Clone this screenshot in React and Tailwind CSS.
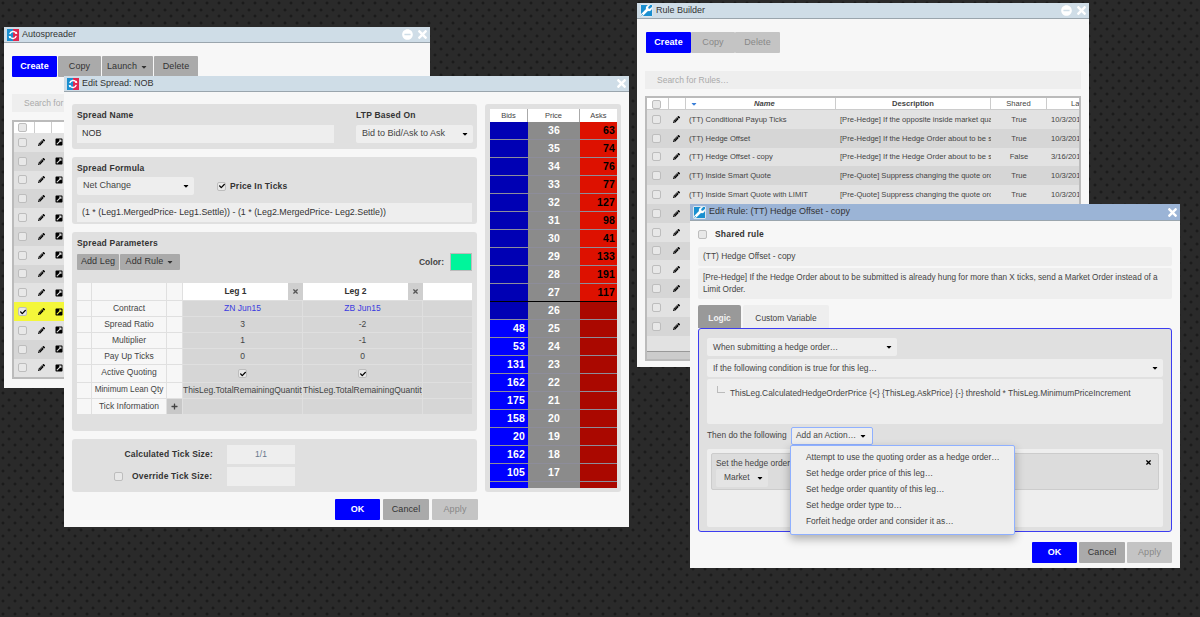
import { FaPencilAlt, FaExternalLinkSquareAlt, FaTimes, FaMinusCircle, FaCheck, FaPlus, FaWrench, FaCaretDown } from 'react-icons/fa'

const LADDER = [
  [36, '', 63], [35, '', 74], [34, '', 76], [33, '', 77], [32, '', 127],
  [31, '', 98], [30, '', 41], [29, '', 133], [28, '', 191], [27, '', 117],
  [26, '', ''], [25, 48, ''], [24, 53, ''], [23, 131, ''], [22, 162, ''],
  [21, 175, ''], [20, 158, ''], [19, 20, ''], [18, 162, ''], [17, 105, ''], ['', '', ''],
]

const RULES = [
  ['(TT) Conditional Payup Ticks', '[Pre-Hedge] If the opposite inside market quantity is', 'True', '10/3/2014'],
  ['(TT) Hedge Offset', '[Pre-Hedge] If the Hedge Order about to be submitted', 'True', '10/3/2014'],
  ['(TT) Hedge Offset - copy', '[Pre-Hedge] If the Hedge Order about to be submitted', 'False', '3/16/2015'],
  ['(TT) Inside Smart Quote', '[Pre-Quote] Suppress changing the quote order', 'True', '10/3/2014'],
  ['(TT) Inside Smart Quote with LIMIT', '[Pre-Quote] Suppress changing the quote order', 'True', '10/3/2014'],
  ['', '', '', ''], ['', '', '', ''], ['', '', '', ''], ['', '', '', ''], ['', '', '', ''], ['', '', '', ''], ['', '', '', ''],
]

const PARAMS = [
  ['Contract', 'ZN Jun15', 'ZB Jun15'],
  ['Spread Ratio', '3', '-2'],
  ['Multiplier', '1', '-1'],
  ['Pay Up Ticks', '0', '0'],
  ['Active Quoting', 'check', 'check'],
  ['Minimum Lean Qty', 'ThisLeg.TotalRemainingQuantity', 'ThisLeg.TotalRemainingQuantity'],
  ['Tick Information', '', ''],
]

const ACTIONS = [
  'Attempt to use the quoting order as a hedge order…',
  'Set hedge order price of this leg…',
  'Set hedge order quantity of this leg…',
  'Set hedge order type to…',
  'Forfeit hedge order and consider it as…',
]

function SpreadLogo() {
  return (
    <svg viewBox="0 0 14 14" className="w-[12px] h-[12px] shrink-0">
      <rect x="0" y="0" width="7" height="14" fill="#1a8fd0" />
      <rect x="7" y="0" width="7" height="14" fill="#e0284f" />
      <path d="M3.2 6 A4 4 0 0 1 10.6 5" fill="none" stroke="#fff" strokeWidth="1.6" />
      <path d="M10.8 8 A4 4 0 0 1 3.4 9" fill="none" stroke="#fff" strokeWidth="1.6" />
      <path d="M9 5.6 L12 5.8 L11.4 2.8 Z" fill="#fff" />
      <path d="M5 8.4 L2 8.2 L2.6 11.2 Z" fill="#fff" />
    </svg>
  )
}

function RuleLogo() {
  return (
    <span className="w-[13px] h-[13px] shrink-0 bg-[#1a8fd0] rounded-[1px] flex items-center justify-center border border-[#dbe6ee]">
      <FaWrench className="text-white text-[11px]" />
    </span>
  )
}

function Win({ pos, logo, title, bar = 'bg-[#cfdde7]', barH = 'h-[16px]', minimize, children }) {
  return (
    <div className={`absolute bg-[#f7f7f7] flex flex-col overflow-hidden ${pos}`}>
      <div className={`shrink-0 flex items-center pl-[3px] pr-[1px] gap-[3px] border-b border-[#9aa5ad] ${barH} ${bar}`}>
        {logo}
        <span className="text-[9px] text-[#333]">{title}</span>
        <span className="ml-auto flex items-center gap-[3px] text-white">
          {minimize && <FaMinusCircle className="text-[11px]" />}
          <FaTimes className="text-[13px]" />
        </span>
      </div>
      {children}
    </div>
  )
}

function Check({ on, className = '' }) {
  return (
    <span className={`inline-flex items-center justify-center w-[9px] h-[9px] shrink-0 rounded-[2px] border border-[#bdbdbd] bg-[#e8e8e8] ${className}`}>
      {on && <FaCheck className="text-[6px] text-black" />}
    </span>
  )
}

function Btn({ kind, w, h = 'h-[21px]', children }) {
  const look = kind === 'blue' ? 'bg-[#0000ff] text-white font-bold'
    : kind === 'dark' ? 'bg-[#aaaaaa] text-[#333]'
    : 'bg-[#c4c4c4] text-[#888]'
  return (
    <span className={`flex items-center justify-center gap-[3px] text-[9px] tracking-[0.1px] rounded-[1px] ${look} ${w} ${h}`}>
      {children}
    </span>
  )
}

function Select({ w, text, className = '', bg = 'bg-[#eeeeee]', pad = 'pl-[6px]', size = 'text-[9px]' }) {
  return (
    <div className={`flex items-center justify-between h-[18px] rounded-[2px] text-[#444] pr-[4px] ${size} ${bg} ${pad} ${w} ${className}`}>
      <span>{text}</span>
      <FaCaretDown className="text-[8px] text-black" />
    </div>
  )
}

function Panel({ className = '', children }) {
  return <div className={`bg-[#e0e0e0] rounded-[3px] ${className}`}>{children}</div>
}

function Label({ children }) {
  return <div className="text-[8.5px] font-bold leading-[12px] tracking-[0.2px]">{children}</div>
}

function AutospreaderRow({ i }) {
  const yellow = i === 9
  const bg = yellow ? 'bg-[#f4f73a]' : i % 2 ? 'bg-[#d6d6d6]' : 'bg-[#e2e2e2]'
  return (
    <div className={`h-[18.8px] flex items-center pl-[4px] ${bg}`}>
      <Check on={yellow} />
      <FaPencilAlt className="text-[7px] text-black ml-[11px]" />
      <FaExternalLinkSquareAlt className="text-[8px] text-black ml-[10px]" />
    </div>
  )
}

function Autospreader() {
  return (
    <Win pos="left-[4px] top-[27px] w-[426px] h-[361px]" logo={<SpreadLogo />} title="Autospreader" minimize>
      <div className="flex pl-[8px] pt-[13px] gap-[1px]">
        <Btn kind="blue" w="w-[45px]">Create</Btn>
        <Btn kind="dark" w="w-[43px]">Copy</Btn>
        <Btn kind="dark" w="w-[51px]">Launch <FaCaretDown className="text-[8px]" /></Btn>
        <Btn kind="dark" w="w-[44px]">Delete</Btn>
      </div>
      <div className="mx-[8px] mt-[17px] h-[18px] bg-[#eeeeee] text-[8.5px] text-[#aaa] pl-[12px] flex items-center">Search for Autospreader…</div>
      <div className="mx-[8px] mt-[8px] border-2 border-[#bbb]">
        <div className="h-[11px] bg-white flex items-center">
          <span className="w-[21px] h-full pl-[4px] flex items-center border-r border-[#ccc]"><Check /></span>
          <span className="w-[17px] h-full border-r border-[#ccc]" />
        </div>
        {Array.from({ length: 13 }, (_, i) => <AutospreaderRow key={i} i={i} />)}
      </div>
    </Win>
  )
}

function ParamCell({ value }) {
  if (value === 'check') return <Check on />
  if (value.endsWith('Jun15')) return <span className="text-[#3a3ae0]">{value}</span>
  return <span className="whitespace-nowrap">{value}</span>
}

function Ladder() {
  return (
    <Panel className="w-[136px] h-[388px] pt-[5px] pb-[4px] pl-[5px] pr-[4px] flex flex-col">
      <div className="grid grid-cols-[38px_52px_37px] h-[13px] bg-white text-[7.5px] text-[#444] text-center leading-[13px] shrink-0">
        <span className="border-r border-[#aaa]">Bids</span>
        <span className="border-r border-[#aaa]">Price</span>
        <span>Asks</span>
      </div>
      <div className="overflow-hidden flex-1 min-h-0">
        {LADDER.map(([price, bid, ask], i) => {
          const upper = i < 11
          return (
            <div key={i} className={`grid grid-cols-[38px_52px_37px] h-[18.03px] text-[10.5px] font-bold tracking-[0.2px] leading-[17px] ${i === 9 ? 'border-b-2 border-black' : 'border-b border-[#8d8d9a]'}`}>
              <span className={`text-white text-right pr-[3px] ${upper ? 'bg-[#0000b4]' : 'bg-[#0000ff]'}`}>{bid}</span>
              <span className="bg-[#8b8b8b] text-white text-center">{price}</span>
              <span className={`text-black text-right pr-[2px] ${i < 10 ? 'bg-[#dd1100]' : 'bg-[#aa0800]'}`}>{ask}</span>
            </div>
          )
        })}
      </div>
    </Panel>
  )
}

function EditSpread() {
  return (
    <Win pos="left-[64px] top-[76px] w-[565px] h-[451px]" logo={<SpreadLogo />} title="Edit Spread: NOB">
      <div className="flex gap-[8px] pl-[8px] pt-[12px] text-[#333]">
        <div className="w-[405px] flex flex-col gap-[8px]">
          <Panel className="h-[45px] px-[5px] pt-[5px] grid grid-cols-[279px_1fr]">
            <div>
              <Label>Spread Name</Label>
              <div className="w-[257px] h-[18px] mt-[4px] bg-[#eeeeee] text-[9px] pl-[5px] flex items-center">NOB</div>
            </div>
            <div>
              <Label>LTP Based On</Label>
              <Select w="w-[117px]" className="mt-[4px]" text="Bid to Bid/Ask to Ask" />
            </div>
          </Panel>
          <Panel className="h-[67px] px-[5px] pt-[5px]">
            <Label>Spread Formula</Label>
            <div className="flex items-center mt-[3px]">
              <Select w="w-[117px]" text="Net Change" />
              <Check on className="ml-[23px]" />
              <span className="text-[8.5px] font-bold ml-[4px] tracking-[0.2px]">Price In Ticks</span>
            </div>
            <div className="h-[19px] mt-[8px] bg-[#eeeeee] text-[8.9px] pl-[5px] flex items-center">
              (1 * (Leg1.MergedPrice- Leg1.Settle)) - (1 * (Leg2.MergedPrice- Leg2.Settle))
            </div>
          </Panel>
          <Panel className="h-[199px] px-[5px] pt-[5px]">
            <Label>Spread Parameters</Label>
            <div className="flex items-center gap-[1px] mt-[4px]">
              <Btn kind="dark" w="w-[42px]" h="h-[16px]">Add Leg</Btn>
              <Btn kind="dark" w="w-[60px]" h="h-[16px]">Add Rule <FaCaretDown className="text-[8px]" /></Btn>
              <span className="ml-auto text-[8.5px] font-bold text-[#444] mr-[5px]">Color:</span>
              <span className="w-[22px] h-[18px] bg-[#00f59b] border border-[#bbb]" />
            </div>
            <div className="mt-[12px] grid grid-cols-[15px_75px_16px_105px_15px_105px_15px_1fr] text-[8.5px] text-center text-[#444]">
              <span className="h-[17px] bg-[#f7f7f7] border-r border-[#e0e0e0]" />
              <span className="bg-[#f7f7f7] border-r border-[#e0e0e0]" />
              <span className="bg-[#f7f7f7] border-r border-[#e0e0e0]" />
              <span className="bg-white font-bold leading-[17px] text-[#333]">Leg 1</span>
              <span className="bg-[#cfcfcf] flex items-center justify-center"><FaTimes className="text-[7px] text-[#555]" /></span>
              <span className="bg-white font-bold leading-[17px] text-[#333]">Leg 2</span>
              <span className="bg-[#cfcfcf] flex items-center justify-center"><FaTimes className="text-[7px] text-[#555]" /></span>
              <span className="bg-white" />
              {PARAMS.map(([label, a, b], i) => (
                <div key={label} className="contents">
                  <span className={`bg-[#f7f7f7] border-t border-r border-[#e0e0e0] ${i === 4 ? 'h-[18px]' : 'h-[16px]'}`} />
                  <span className={`bg-[#f7f7f7] border-t border-r border-[#e0e0e0] whitespace-nowrap flex justify-center ${i === 4 ? 'pt-[1px]' : 'items-center'} ${i === 5 ? 'text-[8.2px]' : ''}`}>{label}</span>
                  <span className="bg-[#f7f7f7] border-t border-r border-[#e0e0e0] flex items-center justify-center">
                    {i === 6 && <span className="w-full h-full bg-[#c8c8c8] flex items-center justify-center"><FaPlus className="text-[7px] text-[#444]" /></span>}
                  </span>
                  <span className={`col-span-2 bg-[#d6d6d6] border-t border-r border-[#dfdfdf] flex items-center overflow-hidden ${i === 5 ? 'justify-start' : 'justify-center'}`}><ParamCell value={a} /></span>
                  <span className={`col-span-2 bg-[#d6d6d6] border-t border-r border-[#dfdfdf] flex items-center overflow-hidden ${i === 5 ? 'justify-start' : 'justify-center'}`}><ParamCell value={b} /></span>
                  <span className="bg-[#d6d6d6] border-t border-[#dfdfdf]" />
                </div>
              ))}
            </div>
          </Panel>
          <Panel className="h-[53px] pt-[6px]">
            <div className="flex items-center h-[19px]">
              <span className="w-[141px] text-right text-[8.5px] font-bold tracking-[0.2px]">Calculated Tick Size:</span>
              <span className="ml-[14px] w-[68px] h-[19px] bg-[#eeeeee] text-[8.5px] text-[#68788c] flex items-center justify-center">1/1</span>
            </div>
            <div className="flex items-center h-[19px] mt-[3px]">
              <Check className="ml-[42px]" />
              <span className="ml-[9px] w-[81px] text-[8.5px] font-bold tracking-[0.2px] whitespace-nowrap">Override Tick Size:</span>
              <span className="ml-[14px] w-[68px] h-[19px] bg-[#eeeeee]" />
            </div>
          </Panel>
        </div>
        <Ladder />
      </div>
      <div className="flex justify-end gap-[3px] pr-[151px] mt-[7px]">
        <Btn kind="blue" w="w-[45px]">OK</Btn>
        <Btn kind="dark" w="w-[46px]">Cancel</Btn>
        <Btn kind="light" w="w-[46px]">Apply</Btn>
      </div>
    </Win>
  )
}

function RuleBuilder() {
  return (
    <Win pos="left-[637px] top-[3px] w-[452px] h-[364px]" logo={<RuleLogo />} title="Rule Builder" minimize>
      <div className="flex pl-[9px] pt-[13px]">
        <Btn kind="blue" w="w-[45px]">Create</Btn>
        <Btn kind="light" w="w-[44px]">Copy</Btn>
        <Btn kind="light" w="w-[45px]">Delete</Btn>
      </div>
      <div className="mx-[8px] mt-[18px] h-[18px] bg-[#eeeeee] text-[8.5px] text-[#aaa] pl-[12px] flex items-center">Search for Rules…</div>
      <div className="mx-[8px] mt-[7px] border-2 border-[#bbb] text-[7.6px] text-[#444] overflow-hidden">
        <div className="grid grid-cols-[22px_17px_150px_155px_56px_1fr] h-[12px] bg-white font-bold text-center leading-[12px] border-b border-[#ccc]">
          <span className="flex items-center pl-[5px] border-r border-[#ccc]"><Check /></span>
          <span className="border-r border-[#ccc]" />
          <span className="border-r border-[#ccc] flex pl-[4px] items-center">
            <FaCaretDown className="text-[8px] text-[#3b7fd8] shrink-0" />
            <span className="italic ml-[56px]">Name</span>
          </span>
          <span className="border-r border-[#ccc]">Description</span>
          <span className="border-r border-[#ccc] font-normal">Shared</span>
          <span className="font-normal text-left pl-[24px]">La</span>
        </div>
        {RULES.map(([name, desc, shared, date], i) => (
          <div key={i} className={`grid grid-cols-[22px_17px_150px_155px_56px_1fr] h-[18.8px] items-center ${i % 2 ? 'bg-[#d6d6d6]' : 'bg-[#e2e2e2]'}`}>
            <span className="pl-[5px] flex"><Check /></span>
            <FaPencilAlt className="text-[7px] text-black ml-[4px]" />
            <span className="pl-[3px] whitespace-nowrap">{name}</span>
            <span className="pl-[4px] whitespace-nowrap overflow-hidden">{desc}</span>
            <span className="text-center">{shared}</span>
            <span className="pl-[4px] whitespace-nowrap overflow-hidden">{date}</span>
          </div>
        ))}
        <div className="h-[15px] bg-[#e2e2e2]" />
        <div className="h-[8px] bg-[#cccccc] border-t border-[#999]" />
      </div>
    </Win>
  )
}

function EditRule() {
  const size = 'text-[8.4px]'
  return (
    <Win pos="left-[690px] top-[204px] w-[490px] h-[364px]" bar="bg-[#9bb4d6]" barH="h-[17px]" logo={<RuleLogo />} title="Edit Rule: (TT) Hedge Offset - copy">
      <div className="relative flex flex-col px-[8px] text-[#444] text-[8.4px]">
        <div className="flex items-center h-[12px] mt-[7px]">
          <Check />
          <span className="ml-[8px] font-bold text-[8.5px] tracking-[0.2px] text-[#333]">Shared rule</span>
        </div>
        <div className="h-[19px] mt-[7px] bg-[#eeeeee] rounded-[2px] flex items-center pl-[5px]">(TT) Hedge Offset - copy</div>
        <div className="h-[31px] mt-[2px] bg-[#eeeeee] rounded-[2px] pl-[5px] pr-[4px] pt-[4px] leading-[12px] text-[8.2px]">
          [Pre-Hedge] If the Hedge Order about to be submitted is already hung for more than X ticks, send a Market Order instead of a Limit Order.
        </div>
        <div className="flex gap-[2px] mt-[6px] h-[23px]">
          <span className="w-[43px] bg-[#999999] text-[#f2f2f2] font-bold rounded-t-[2px] flex items-center justify-center pt-[3px]">Logic</span>
          <span className="w-[86px] bg-[#eeeeee] rounded-t-[2px] flex items-center justify-center pt-[3px]">Custom Variable</span>
        </div>
        <div className="h-[204px] border border-[#3d3df0] rounded-[3px] bg-[#e0e0e0] px-[8px] pt-[9px] pb-[4px] flex flex-col">
          <Select w="w-[190px]" size={size} text="When submitting a hedge order…" />
          <Select w="w-full" className="mt-[3px]" size={size} text="If the following condition is true for this leg…" />
          <div className="h-[45px] mt-[2px] bg-[#eeeeee] rounded-[2px] flex items-start pl-[10px] pt-[8px]">
            <span className="w-[8px] h-[7px] border-l border-b border-[#bbb] -mt-[1px]" />
            <span className="ml-[5px] whitespace-nowrap">ThisLeg.CalculatedHedgeOrderPrice {'{<}'} {'{ThisLeg.AskPrice}'} {'{-}'} threshold * ThisLeg.MinimumPriceIncrement</span>
          </div>
          <div className="flex items-center h-[18px] mt-[3px]">
            <span className="w-[84px] whitespace-nowrap">Then do the following</span>
            <span className="w-[82px] h-[18px] bg-[#eeeeee] border border-[#8fb0ff] rounded-[2px] flex items-center justify-between pl-[4px] pr-[5px] whitespace-nowrap">
              Add an Action… <FaCaretDown className="text-[8px] text-black" />
            </span>
          </div>
          <div className="h-[79px] mt-[4px] bg-[#eeeeee] rounded-[2px] p-[4px]">
            <div className="h-[37px] bg-[#dcdcdc] border border-[#ccc] rounded-[2px] pl-[4px] pt-[3px] relative">
              <div className="leading-[12px]">Set the hedge order type to</div>
              <Select w="w-[52px]" size={size} bg="bg-[#e4e4e4]" pad="pl-[8px]" text="Market" />
              <FaTimes className="absolute right-[6px] top-[5px] text-[7px] text-black" />
            </div>
          </div>
        </div>
        <div className="absolute left-[100px] top-[224px] w-[225px] h-[90px] bg-[#eeeeee] border border-[#8fb0ff] rounded-[2px] shadow-[0_4px_10px_rgba(0,0,0,0.3)] pl-[15px] pt-[3px] flex flex-col">
          {ACTIONS.map(a => <span key={a} className="h-[16px] leading-[16px] whitespace-nowrap">{a}</span>)}
        </div>
        <div className="flex justify-end gap-[2px] mt-[10px]">
          <Btn kind="blue" w="w-[45px]">OK</Btn>
          <Btn kind="dark" w="w-[46px]">Cancel</Btn>
          <Btn kind="light" w="w-[45px]">Apply</Btn>
        </div>
      </div>
    </Win>
  )
}

export default function App() {
  return (
    <div className="relative w-[1200px] h-[617px] overflow-hidden font-['Liberation_Sans',Arial,sans-serif] bg-[#2a2a2a] bg-[radial-gradient(circle_at_3px_3px,#1b1b1b_1.2px,transparent_1.8px),radial-gradient(circle_at_9px_10px,#1b1b1b_1.2px,transparent_1.8px)] bg-[length:12px_13px]">
      <Autospreader />
      <EditSpread />
      <RuleBuilder />
      <EditRule />
    </div>
  )
}
